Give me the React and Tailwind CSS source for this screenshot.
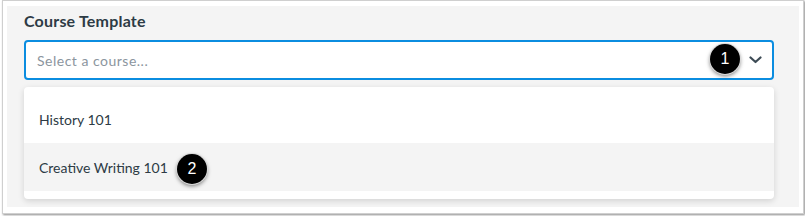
import React from "react";

function Badge({ n }) {
  return (
    <div className="flex h-[30px] w-[30px] shrink-0 items-center justify-center rounded-full bg-black text-[16px] leading-none text-white shadow-[0_2px_4px_rgba(0,0,0,0.55)] ring-1 ring-[#d9d9d9]" style={{ fontFamily: "'Liberation Sans', Arial, sans-serif" }}>
      {n}
    </div>
  );
}

export default function App() {
  return (
    <div className="h-[216px] w-[805px] bg-white" style={{ fontFamily: "Lato, 'Noto Sans', sans-serif" }}>
      <div className="ml-[2px] h-[214px] w-[802px] border border-[#cfcfcf] bg-white px-[4px] pb-[5px] pt-[5px] shadow-[1px_1px_2px_rgba(0,0,0,0.45)]">
        <div className="h-[201px] bg-[#f4f4f4] pl-[17px] pr-[25px] pt-[5px]">
          <div className="mb-[9px] h-[20px] text-[16px] font-bold leading-[20px] tracking-[0.2px] text-[#2d3b45]">Course Template</div>
          <div className="flex h-[40px] items-center rounded-[4px] border-2 border-[#0b8de0] bg-white pl-[11px] pr-[10px]">
            <span className="flex-1 text-[14px] tracking-[0.5px] text-[#8b959e]">Select a course...</span>
            <div className="-mt-[3px] mr-[9px]">
              <Badge n="1" />
            </div>
            <svg width="13" height="8" viewBox="0 0 13 8" className="text-[#3d4b55]">
              <path d="M1.5 1.5 L6.5 6 L11.5 1.5" fill="none" stroke="currentColor" strokeWidth="2.2" strokeLinecap="round" strokeLinejoin="round" />
            </svg>
          </div>
          <div className="mt-[7px] rounded-[4px] bg-white py-[8px] shadow-[0_2px_6px_rgba(0,0,0,0.14)]">
            <div className="flex h-[48px] items-center pl-[15px] text-[14px] text-[#2d3b45]">History 101</div>
            <div className="flex h-[48px] items-center bg-[#f4f4f4] pl-[15px] text-[14px] text-[#2d3b45]">
              <span>Creative Writing 101</span>
              <div className="ml-[9px] mt-[4px]">
                <Badge n="2" />
              </div>
            </div>
          </div>
        </div>
      </div>
    </div>
  );
}
